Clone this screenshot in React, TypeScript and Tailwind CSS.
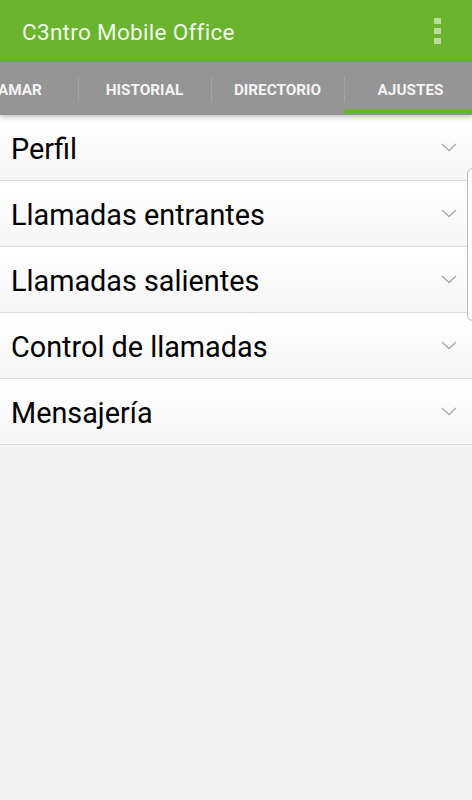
import React from "react";

const tabs = ["LLAMAR", "HISTORIAL", "DIRECTORIO", "AJUSTES"];
const items = [
  "Perfil",
  "Llamadas entrantes",
  "Llamadas salientes",
  "Control de llamadas",
  "Mensajería",
];

const Chevron = () => (
  <svg width="16" height="9" viewBox="0 0 16 9" fill="none">
    <path d="M1 1l7 6.5L15 1" stroke="#a9a9a9" strokeWidth="1.4" />
  </svg>
);

export default function App() {
  return (
    <div
      className="relative flex h-[800px] w-[472px] flex-col overflow-hidden bg-[#f4f4f4]"
      style={{ fontFamily: "Roboto, 'Noto Sans', sans-serif" }}
    >
      <header className="flex h-[62px] shrink-0 items-center justify-between bg-[#6ab42e] pl-[22px] pr-[31px]">
        <h1 className="mt-[3px] text-[22.5px] font-normal tracking-[0.3px] text-[#f1f7ea]">C3ntro Mobile Office</h1>
        <div className="flex flex-col gap-[4px]">
          <span className="h-[6px] w-[7px] bg-[#b9dd9c]" />
          <span className="h-[6px] w-[7px] bg-[#b9dd9c]" />
          <span className="h-[6px] w-[7px] bg-[#b9dd9c]" />
        </div>
      </header>

      <nav className="relative z-10 flex h-[53px] shrink-0 overflow-hidden bg-[#959595] shadow-[0_2px_5px_rgba(0,0,0,0.25)]">
        <div className="ml-[-55px] flex">
          {tabs.map((t, i) => (
            <div key={t} className="relative flex h-[53px] w-[133px] items-center justify-center">
              {i > 0 && <span className="absolute left-0 top-[14px] h-[26px] w-px bg-[#a3a3a3]" />}
              <span className="pt-[3px] text-[15.3px] font-bold text-[#f4f4f4]">{t}</span>
              {t === "AJUSTES" && (
                <span className="absolute bottom-[1px] left-0 right-0 h-[5px] bg-[#6ab42e]" />
              )}
            </div>
          ))}
        </div>
      </nav>

      <ul className="flex flex-col">
        {items.map((label) => (
          <li
            key={label}
            className="flex h-[66px] items-center justify-between border-b border-[#dcdcdc] bg-gradient-to-b from-white to-[#f6f6f6] pl-[11px] pr-[15px]"
          >
            <span className="pt-[4px] text-[28.8px] leading-none text-black">{label}</span>
            <Chevron />
          </li>
        ))}
      </ul>

      <div className="absolute right-[-4px] top-[168px] h-[153px] w-[9px] rounded-l-[6px] border border-[#bdbdbd] bg-[#fbfbfb]" />
    </div>
  );
}
